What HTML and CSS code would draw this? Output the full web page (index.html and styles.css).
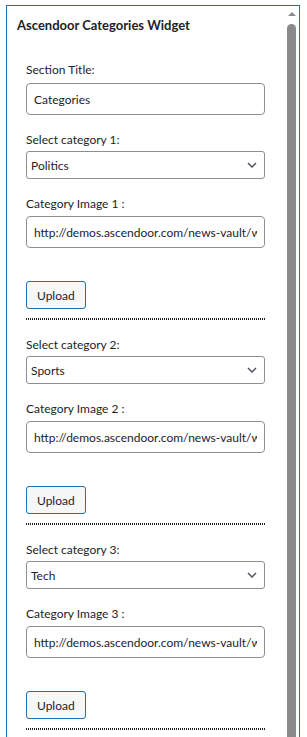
FILE: index.html
```html
<!DOCTYPE html>
<html lang="en">
<head>
  <meta charset="UTF-8">
  <meta name="viewport" content="width=device-width, initial-scale=1.0">
  <title>Ascendoor Categories Widget</title>
  <link rel="stylesheet" href="styles.css">
</head>
<body>

<div class="frame">
  <div class="widget">
    <h3 class="widget-title">Ascendoor Categories Widget</h3>

    <div class="fields">
      <div class="field title-field">
        <label for="section-title">Section Title:</label>
        <input type="text" id="section-title" class="text-input" value="Categories">
      </div>

      <div class="section">
        <div class="field">
          <label for="cat-1">Select category 1:</label>
          <div class="select-wrap">
            <select id="cat-1" class="select-input">
              <option>Politics</option>
              <option>Sports</option>
              <option>Tech</option>
            </select>
            <svg class="chevron" width="10" height="6" viewBox="0 0 10 6"><path d="M1 1 L5 5 L9 1" fill="none" stroke="#50575e" stroke-width="1.5"/></svg>
          </div>
        </div>
        <div class="field image-field">
          <label for="img-1">Category Image 1 :</label>
          <input type="text" id="img-1" class="text-input" value="http://demos.ascendoor.com/news-vault/wp-content/uploads/sites/8/2022/11/politics.jpg">
        </div>
        <button class="upload-btn">Upload</button>
        <div class="divider"></div>
      </div>

      <div class="section">
        <div class="field">
          <label for="cat-2">Select category 2:</label>
          <div class="select-wrap">
            <select id="cat-2" class="select-input">
              <option>Sports</option>
              <option>Politics</option>
              <option>Tech</option>
            </select>
            <svg class="chevron" width="10" height="6" viewBox="0 0 10 6"><path d="M1 1 L5 5 L9 1" fill="none" stroke="#50575e" stroke-width="1.5"/></svg>
          </div>
        </div>
        <div class="field image-field">
          <label for="img-2">Category Image 2 :</label>
          <input type="text" id="img-2" class="text-input" value="http://demos.ascendoor.com/news-vault/wp-content/uploads/sites/8/2022/11/sports.jpg">
        </div>
        <button class="upload-btn">Upload</button>
        <div class="divider"></div>
      </div>

      <div class="section">
        <div class="field">
          <label for="cat-3">Select category 3:</label>
          <div class="select-wrap">
            <select id="cat-3" class="select-input">
              <option>Tech</option>
              <option>Politics</option>
              <option>Sports</option>
            </select>
            <svg class="chevron" width="10" height="6" viewBox="0 0 10 6"><path d="M1 1 L5 5 L9 1" fill="none" stroke="#50575e" stroke-width="1.5"/></svg>
          </div>
        </div>
        <div class="field image-field">
          <label for="img-3">Category Image 3 :</label>
          <input type="text" id="img-3" class="text-input" value="http://demos.ascendoor.com/news-vault/wp-content/uploads/sites/8/2022/11/tech.jpg">
        </div>
        <button class="upload-btn">Upload</button>
        <div class="divider"></div>
      </div>
    </div>
  </div>

  <div class="scrollbar">
    <div class="scroll-arrow"></div>
    <div class="scroll-thumb"></div>
  </div>
</div>

</body>
</html>
```

FILE: styles.css
```css
html, body {
  height: 100%;
  overflow: hidden;
}

body {
  margin: 0;
  padding: 0;
  background: #fff;
  font-family: Lato, 'Noto Sans', sans-serif;
  font-size: 12px;
  line-height: 18px;
  color: #1d2327;
}

.frame {
  display: flex;
  width: 292px;
  height: 760px;
  margin: 5px 0 0 6px;
  border: 1px solid #2271b1;
  border-bottom: none;
}

.widget {
  flex: 1;
  padding: 10px 0 0 10px;
}

.widget-title {
  margin: 0;
  font-size: 13px;
  line-height: 18px;
  font-weight: 700;
}

.fields {
  width: 239px;
  margin-left: 9px;
  padding-top: 27px;
}

.field label {
  display: block;
  margin-bottom: 2px;
}

.title-field label {
  margin-bottom: 4px;
}

.title-field {
  margin-bottom: 1px;
}

.image-field label {
  margin-bottom: 3px;
}

.section .field:first-child {
  margin-top: 16px;
}

.image-field {
  margin-top: 16px;
}

.text-input {
  display: block;
  box-sizing: border-box;
  width: 100%;
  height: 32px;
  margin: 0;
  padding: 0 7px;
  border: 1px solid #8c8f94;
  border-radius: 4px;
  background: #fff;
  font-family: inherit;
  font-size: 12px;
  color: #1d2327;
  outline: none;
}

.select-wrap {
  position: relative;
}

.select-input {
  display: block;
  box-sizing: border-box;
  width: 100%;
  height: 28px;
  margin: 0;
  padding: 0 24px 0 4px;
  border: 1px solid #8c8f94;
  border-radius: 3px;
  background: #fff;
  font-family: inherit;
  font-size: 12px;
  color: #1d2327;
  appearance: none;
  -webkit-appearance: none;
  outline: none;
}

.chevron {
  position: absolute;
  right: 8px;
  top: 11px;
  pointer-events: none;
}

.upload-btn {
  display: block;
  box-sizing: border-box;
  height: 28px;
  margin-top: 33px;
  padding: 0 10px;
  border: 1px solid #2271b1;
  border-radius: 3px;
  background: #f6f7f7;
  font-family: inherit;
  font-size: 12px;
  color: #1d2327;
  cursor: pointer;
}

.divider {
  height: 2px;
  margin-top: 9px;
  background: repeating-linear-gradient(to right, #1d2327 0 1px, transparent 1px 2px);
}

.scrollbar {
  width: 9px;
  margin-right: 3px;
  display: flex;
  flex-direction: column;
  align-items: center;
}

.scroll-arrow {
  width: 0;
  height: 0;
  margin-top: 6px;
  border-left: 4px solid transparent;
  border-right: 4px solid transparent;
  border-bottom: 4px solid #8a8a8a;
}

.scroll-thumb {
  flex: 1;
  width: 9px;
  margin-top: 8px;
  background: #8a8a8a;
  border-radius: 5px 5px 0 0;
}
```
